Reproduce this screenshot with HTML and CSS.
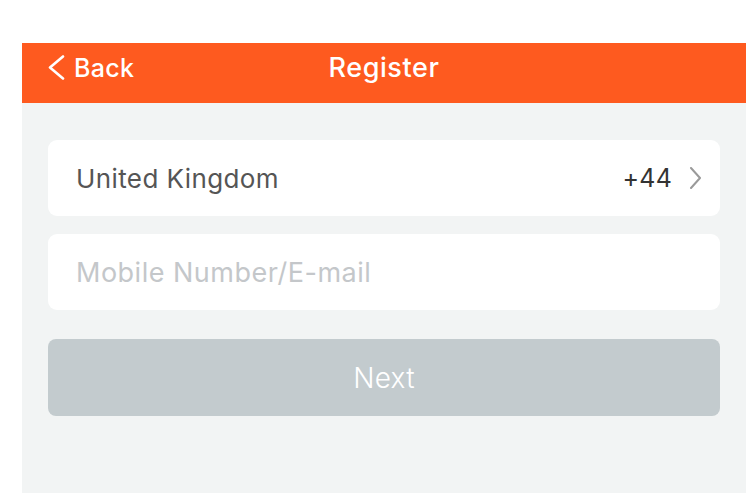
FILE: index.html
```html
<!DOCTYPE html>
<html>
<head>
<meta charset="utf-8">
<link rel="stylesheet" href="styles.css">
</head>
<body>
<div class="phone">
  <header class="nav">
    <div class="back">
      <svg class="back-icon" width="19" height="25" viewBox="0 0 19 25"><path d="M16 1.5 L3 12.5 L16 23.5" fill="none" stroke="#fff" stroke-width="2.6" stroke-linecap="round" stroke-linejoin="round"/></svg>
      <span>Back</span>
    </div>
    <div class="title">Register</div>
  </header>
  <main class="content">
    <div class="card country">
      <span class="country-name">United Kingdom</span>
      <span class="code">+44
        <svg class="chev" width="13" height="22" viewBox="0 0 13 22"><path d="M2 1 L11 11 L2 21" fill="none" stroke="#9a9a9a" stroke-width="2" stroke-linecap="round" stroke-linejoin="round"/></svg>
      </span>
    </div>
    <div class="card field">
      <span class="placeholder">Mobile Number/E-mail</span>
    </div>
    <button class="next">Next</button>
  </main>
</div>
</body>
</html>
```

FILE: styles.css
```css
* { box-sizing: border-box; }
html, body { margin: 0; padding: 0; background: #fff; }
body { font-family: Inter, "Noto Sans", sans-serif; }
.phone {
  margin: 43px 0 0 22px;
  width: 724px;
  height: 450px;
  display: flex;
  flex-direction: column;
  background: #f2f4f4;
}
.nav {
  height: 60px;
  padding-bottom: 11px;
  background: #fe5a1f;
  color: #fff;
  display: flex;
  align-items: center;
  position: relative;
}
.back {
  display: flex;
  align-items: center;
  gap: 8px;
  padding-left: 25px;
  font-size: 25px;
  font-weight: 500;
  letter-spacing: 0.3px;
}
.back-icon { display: block; }
.title {
  position: absolute;
  left: 0; right: 0;
  top: 0;
  height: 49px;
  line-height: 49px;
  text-align: center;
  font-size: 27px;
  font-weight: 500;
  letter-spacing: 0.6px;
  pointer-events: none;
}
.content {
  padding: 37px 26px 0 26px;
  display: flex;
  flex-direction: column;
  gap: 18px;
}
.card {
  height: 76px;
  background: #fff;
  border-radius: 9px;
  display: flex;
  align-items: center;
  padding: 0 18px 0 28px;
  font-size: 26px;
  letter-spacing: 0.4px;
}
.country { justify-content: space-between; }
.country-name { color: #555; }
.code { color: #333; display: flex; align-items: center; gap: 17px; font-size: 25px; letter-spacing: 0.2px; }
.chev { display: block; }
.placeholder { color: #c4c7ca; font-size: 27px; letter-spacing: 0.5px; }
.next {
  margin-top: 11px;
  height: 77px;
  border: none;
  border-radius: 8px;
  background: #c3cbce;
  color: #fff;
  font-family: Inter, sans-serif;
  font-weight: 300;
  font-size: 28px;
  letter-spacing: 0.3px;
}
```
